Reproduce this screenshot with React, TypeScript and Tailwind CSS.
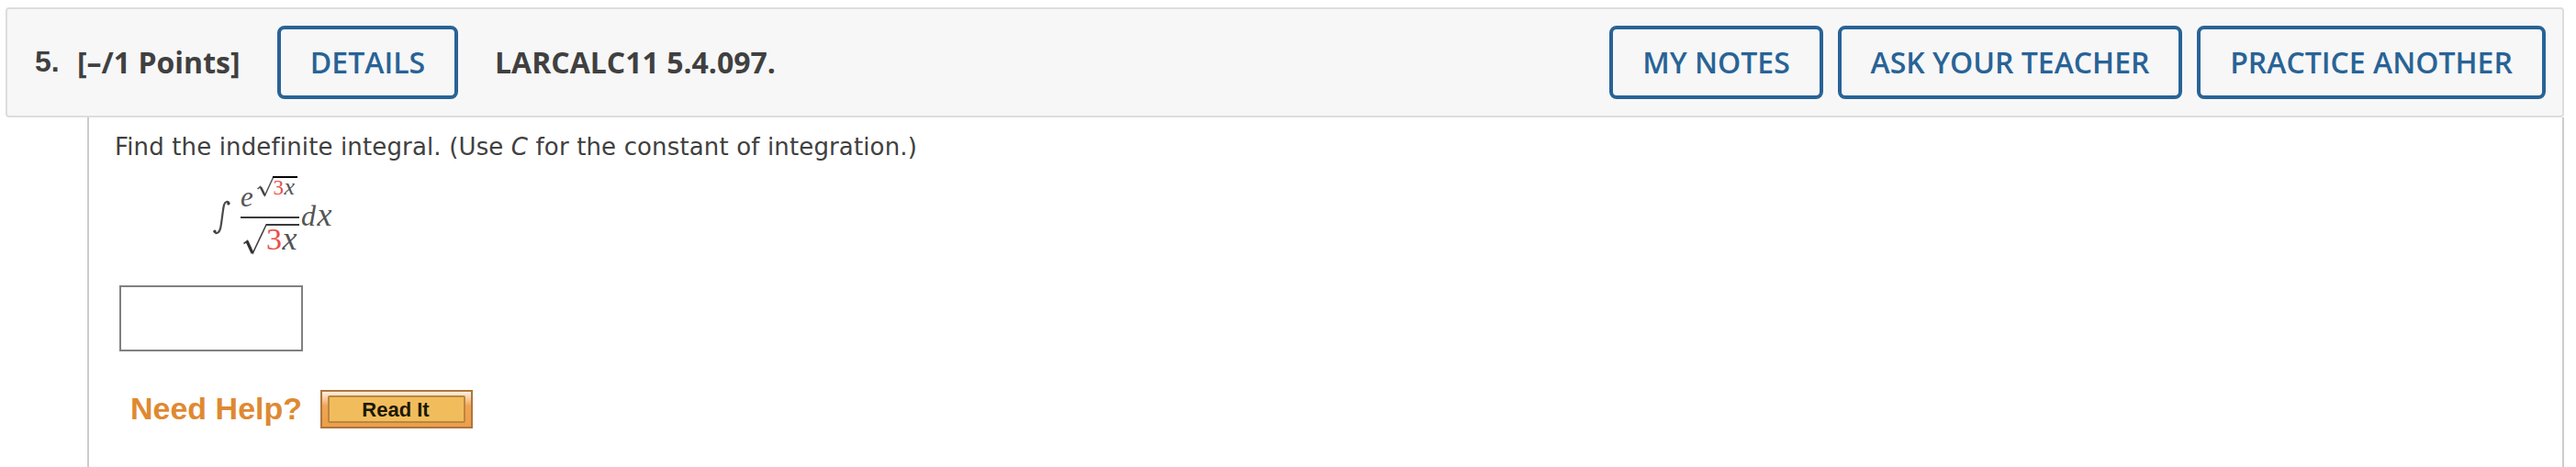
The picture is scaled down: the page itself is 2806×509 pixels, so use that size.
import type { ReactNode } from "react";

function HeaderButton({ children, className }: { children: ReactNode; className: string }) {
    return (
        <button
            className={`h-20 shrink-0 rounded-lg border-4 border-[#286396] text-center text-[32px] leading-none font-semibold whitespace-nowrap text-[#286396] ${className}`}
        >
            {children}
        </button>
    );
}

function Integral() {
    return (
        <svg
            width="140"
            height="92"
            viewBox="0 0 140 92"
            className="mt-[14px] ml-[105px] block font-['Liberation_Serif',serif]"
            fill="#3c3c3c"
        >
            <path
                d="M19.500 31.500c-1-2.500-4.500-2-5.500 2-1.300 5-2.200 17-3.700 24.500-1.200 6-5 7.500-6.800 4.500"
                fill="none"
                stroke="#4a4a4a"
                strokeWidth="2.200"
                strokeLinecap="round"
            />
            <circle cx="18.800" cy="32" r="1.600" />
            <circle cx="4" cy="62" r="1.600" />

            {/* numerator */}
            <text x="32" y="34.500" fontSize="31" fontStyle="italic" fill="#555">e</text>
            <path d="M50.500 16l3-2.500 5 9.500 9-19.500" fill="none" stroke="#555" strokeWidth="1.500" />
            <path d="M54 14l4.500 9" stroke="#444" strokeWidth="2.500" />
            <path d="M67 3h27" stroke="#000" strokeWidth="2" />
            <text x="67.500" y="21.500" fontSize="23" fill="#e8504c">3</text>
            <text x="79.500" y="21.500" fontSize="26" fontStyle="italic" fill="#555">x</text>

            <path d="M32 47h64" stroke="#3a3a3a" strokeWidth="2" />

            {/* denominator */}
            <path d="M35.500 75.500l4-3 6 13 14.500-30.500" fill="none" stroke="#444" strokeWidth="1.600" />
            <path d="M39 73l6 13" stroke="#333" strokeWidth="3" />
            <path d="M59.500 55H96" stroke="#3a3a3a" strokeWidth="2" />
            <text x="60" y="81.500" fontSize="34" fill="#e8504c">3</text>
            <text x="77.500" y="81.500" fontSize="36" fontStyle="italic" fill="#555">x</text>

            <text x="98" y="56" fontSize="32" fontStyle="italic" fill="#555">d</text>
            <text x="115.500" y="56" fontSize="36" fontStyle="italic" fill="#555">x</text>
        </svg>
    );
}

export default function App() {
    return (
        <div className="flex h-[509px] w-[2806px] flex-col overflow-hidden bg-white pt-2 pl-1.5 font-['Open_Sans',sans-serif] text-[#404040]">
            <header className="flex h-[120px] w-[2787px] shrink-0 items-center rounded border-2 border-[#ddd] bg-[#f7f7f7] pr-[18px] pl-[30px] text-[32px] leading-none font-bold whitespace-nowrap">
                <span className="w-[46px] pb-0.5 font-['Liberation_Sans',sans-serif]">5.</span>
                <span className="w-[218px]">[–/1 Points]</span>
                <HeaderButton className="w-[197px]">DETAILS</HeaderButton>
                <span className="ml-10">LARCALC11 5.4.097.</span>
                <div className="ml-auto flex gap-4">
                    <HeaderButton className="w-[233px]">MY NOTES</HeaderButton>
                    <HeaderButton className="w-[375px]">ASK YOUR TEACHER</HeaderButton>
                    <HeaderButton className="w-[380px]">PRACTICE ANOTHER</HeaderButton>
                </div>
            </header>

            <main className="ml-[89px] w-[2698px] flex-1 border-x-2 border-[#ccc] pt-4 pl-7">
                <p className="h-8 font-['DejaVu_Sans',sans-serif] text-[26px] leading-8 tracking-[0.14px] whitespace-nowrap">
                    Find the indefinite integral. (Use <i>C</i> for the constant of integration.)
                </p>
                <Integral />
                <input
                    type="text"
                    aria-label="Answer"
                    className="mt-[29px] ml-[5px] block h-[72px] w-[200px] border-2 border-[#808080] bg-white px-2 text-[28px] outline-none"
                />
                <div className="mt-[42px] ml-[17px] flex h-[42px] items-center font-['Liberation_Sans',sans-serif] font-bold">
                    <span className="w-[207px] pb-0.5 text-[34px] leading-none whitespace-nowrap text-[#df8932]">Need Help?</span>
                    <button className="h-[42px] w-[166px] border-2 border-[#ac7640] bg-linear-to-b from-[#fff0e2] via-[#f0a553] via-40% to-[#ed9e49] px-1.5 py-1">
                        <span className="flex h-[30px] items-center justify-center rounded-xs border-2 border-[#b98742] bg-[#f1bd5c] pt-0.5 pr-0.5 text-[22px] leading-none text-[#1d1806]">
                            Read It
                        </span>
                    </button>
                </div>
            </main>
        </div>
    );
}
